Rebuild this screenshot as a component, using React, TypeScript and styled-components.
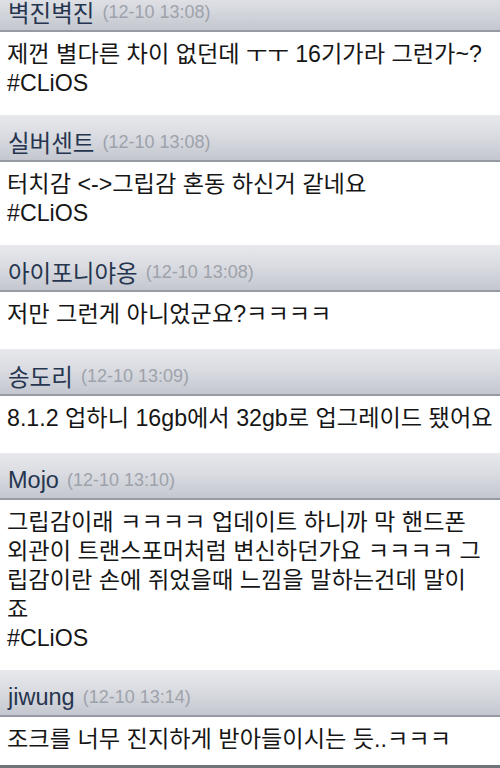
import React from 'react'
import styled, {createGlobalStyle} from 'styled-components'

const GlobalStyle = createGlobalStyle`
  html, body {
    margin: 0;
    padding: 0;
    background: #ffffff;
  }
  body {
    font-family: "Liberation Sans", "Noto Sans CJK KR", sans-serif;
    -webkit-font-smoothing: antialiased;
  }
`

const Screen = styled.div`
  display: flex;
  flex-direction: column;
  width: 500px;
  height: 768px;
  overflow: hidden;
  background: #ffffff;
`

const Feed = styled.div`
  flex: 1;
  min-height: 0;
  overflow: hidden;
  display: flex;
  flex-direction: column;
`

// the list is scrolled a little, so the first header sits partly above the top edge
const FeedInner = styled.div`
  margin-top: -15px;
  display: flex;
  flex-direction: column;
`

const Footer = styled.div`
  height: 3px;
  flex-shrink: 0;
  background: #6f737a;
`

const Header = styled.div`
  display: flex;
  align-items: center;
  height: 36px;
  padding: 9px 8px 0;
  background: linear-gradient(to bottom, #e8e9ed 0%, #dadce2 45%, #c4c7cf 100%);
  border-bottom: 2px solid #969aa2;
  white-space: nowrap;
`

const Author = styled.span`
  font-size: 23.5px;
  color: #26354f;
`

const Stamp = styled.span`
  margin-left: 8px;
  font-size: 18px;
  color: #9ea2aa;
`

const Body = styled.div`
  min-height: 57px;
  box-sizing: border-box;
  padding: 8px 7px 17px;
  background: #ffffff;
  font-size: 23.2px;
  line-height: 29px;
  color: #161616;
`

const Line = styled.div`
  white-space: nowrap;
`

interface Comment {
  author: string,
  time: string,
  lines: string[],
}

const comments: Comment[] = [
  {author: '벽진벽진', time: '12-10 13:08', lines: ['제껀 별다른 차이 없던데 ㅜㅜ 16기가라 그런가~?', '#CLiOS']},
  {author: '실버센트', time: '12-10 13:08', lines: ['터치감 <->그립감 혼동 하신거 같네요', '#CLiOS']},
  {author: '아이포니야옹', time: '12-10 13:08', lines: ['저만 그런게 아니었군요?ㅋㅋㅋㅋ']},
  {author: '송도리', time: '12-10 13:09', lines: ['8.1.2 업하니 16gb에서 32gb로 업그레이드 됐어요']},
  {
    author: 'Mojo',
    time: '12-10 13:10',
    lines: [
      '그립감이래 ㅋㅋㅋㅋ 업데이트 하니까 막 핸드폰',
      '외관이 트랜스포머처럼 변신하던가요 ㅋㅋㅋㅋ 그',
      '립감이란 손에 쥐었을때 느낌을 말하는건데 말이',
      '죠',
      '#CLiOS',
    ],
  },
  {author: 'jiwung', time: '12-10 13:14', lines: ['조크를 너무 진지하게 받아들이시는 듯..ㅋㅋㅋ']},
]

function CommentItem({comment}: {comment: Comment}) {
  return (
    <>
      <Header>
        <Author>{comment.author}</Author>
        <Stamp>({comment.time})</Stamp>
      </Header>
      <Body>
        {comment.lines.map((line, i) => (
          <Line key={i}>{line}</Line>
        ))}
      </Body>
    </>
  )
}

export default function App() {
  return (
    <>
      <GlobalStyle />
      <Screen>
        <Feed>
          <FeedInner>
            {comments.map((c, i) => (
              <CommentItem key={i} comment={c} />
            ))}
          </FeedInner>
        </Feed>
        <Footer />
      </Screen>
    </>
  )
}
